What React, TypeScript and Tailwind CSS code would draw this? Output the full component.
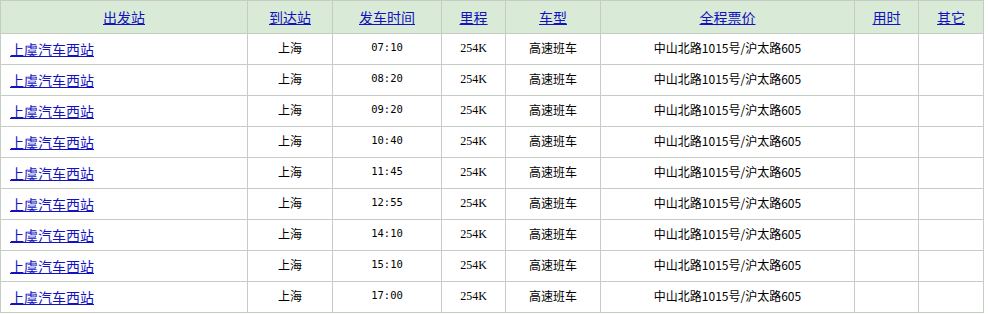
import React from "react";

const times = ["07:10", "08:20", "09:20", "10:40", "11:45", "12:55", "14:10", "15:10", "17:00"];
const headers = [
  { t: "出发站", w: "w-[247px]" },
  { t: "到达站", w: "w-[85px]" },
  { t: "发车时间", w: "w-[109px]" },
  { t: "里程", w: "w-[64px]" },
  { t: "车型", w: "w-[95px]" },
  { t: "全程票价", w: "w-[254px]" },
  { t: "用时", w: "w-[64px]" },
  { t: "其它", w: "w-[65px]" },
];

const cell = "border border-[#c4ccc4] pt-0 pb-[2px]";

export default function App() {
  return (
    <div className="bg-white w-[988px] h-[314px] [font-family:'Noto_Sans_CJK_SC',sans-serif]">
      <table className="border-collapse table-fixed w-[984px] border border-[#c4ccc4]">
        <thead>
          <tr className="h-[33px] bg-[#d9ebd6]">
            {headers.map((h) => (
              <th key={h.t} className={`${h.w} border border-[#c4ccc4] font-normal text-center px-0 pt-0 pb-[3px]`}>
                <a href="#" className="text-[14px] text-[#1212c0] underline leading-none">
                  {h.t}
                </a>
              </th>
            ))}
          </tr>
        </thead>
        <tbody>
          {times.map((t) => (
            <tr key={t} className="h-[31px]">
              <td className={`${cell} pl-[9px] text-left`}>
                <a href="#" className="text-[14px] text-[#1212c0] underline leading-none">
                  上虞汽车西站
                </a>
              </td>
              <td className={`${cell} text-center text-[12px] text-black`}>上海</td>
              <td className={`${cell} text-center text-[10.5px] text-black [font-family:'DejaVu_Sans_Mono',monospace]`}>{t}</td>
              <td className={`${cell} text-center text-[12px] text-black [font-family:'Liberation_Serif',serif]`}>254K</td>
              <td className={`${cell} text-center text-[12px] text-black`}>高速班车</td>
              <td className={`${cell} text-center text-[12px] text-black`}>中山北路1015号/沪太路605</td>
              <td className={cell}></td>
              <td className={cell}></td>
            </tr>
          ))}
        </tbody>
      </table>
    </div>
  );
}
